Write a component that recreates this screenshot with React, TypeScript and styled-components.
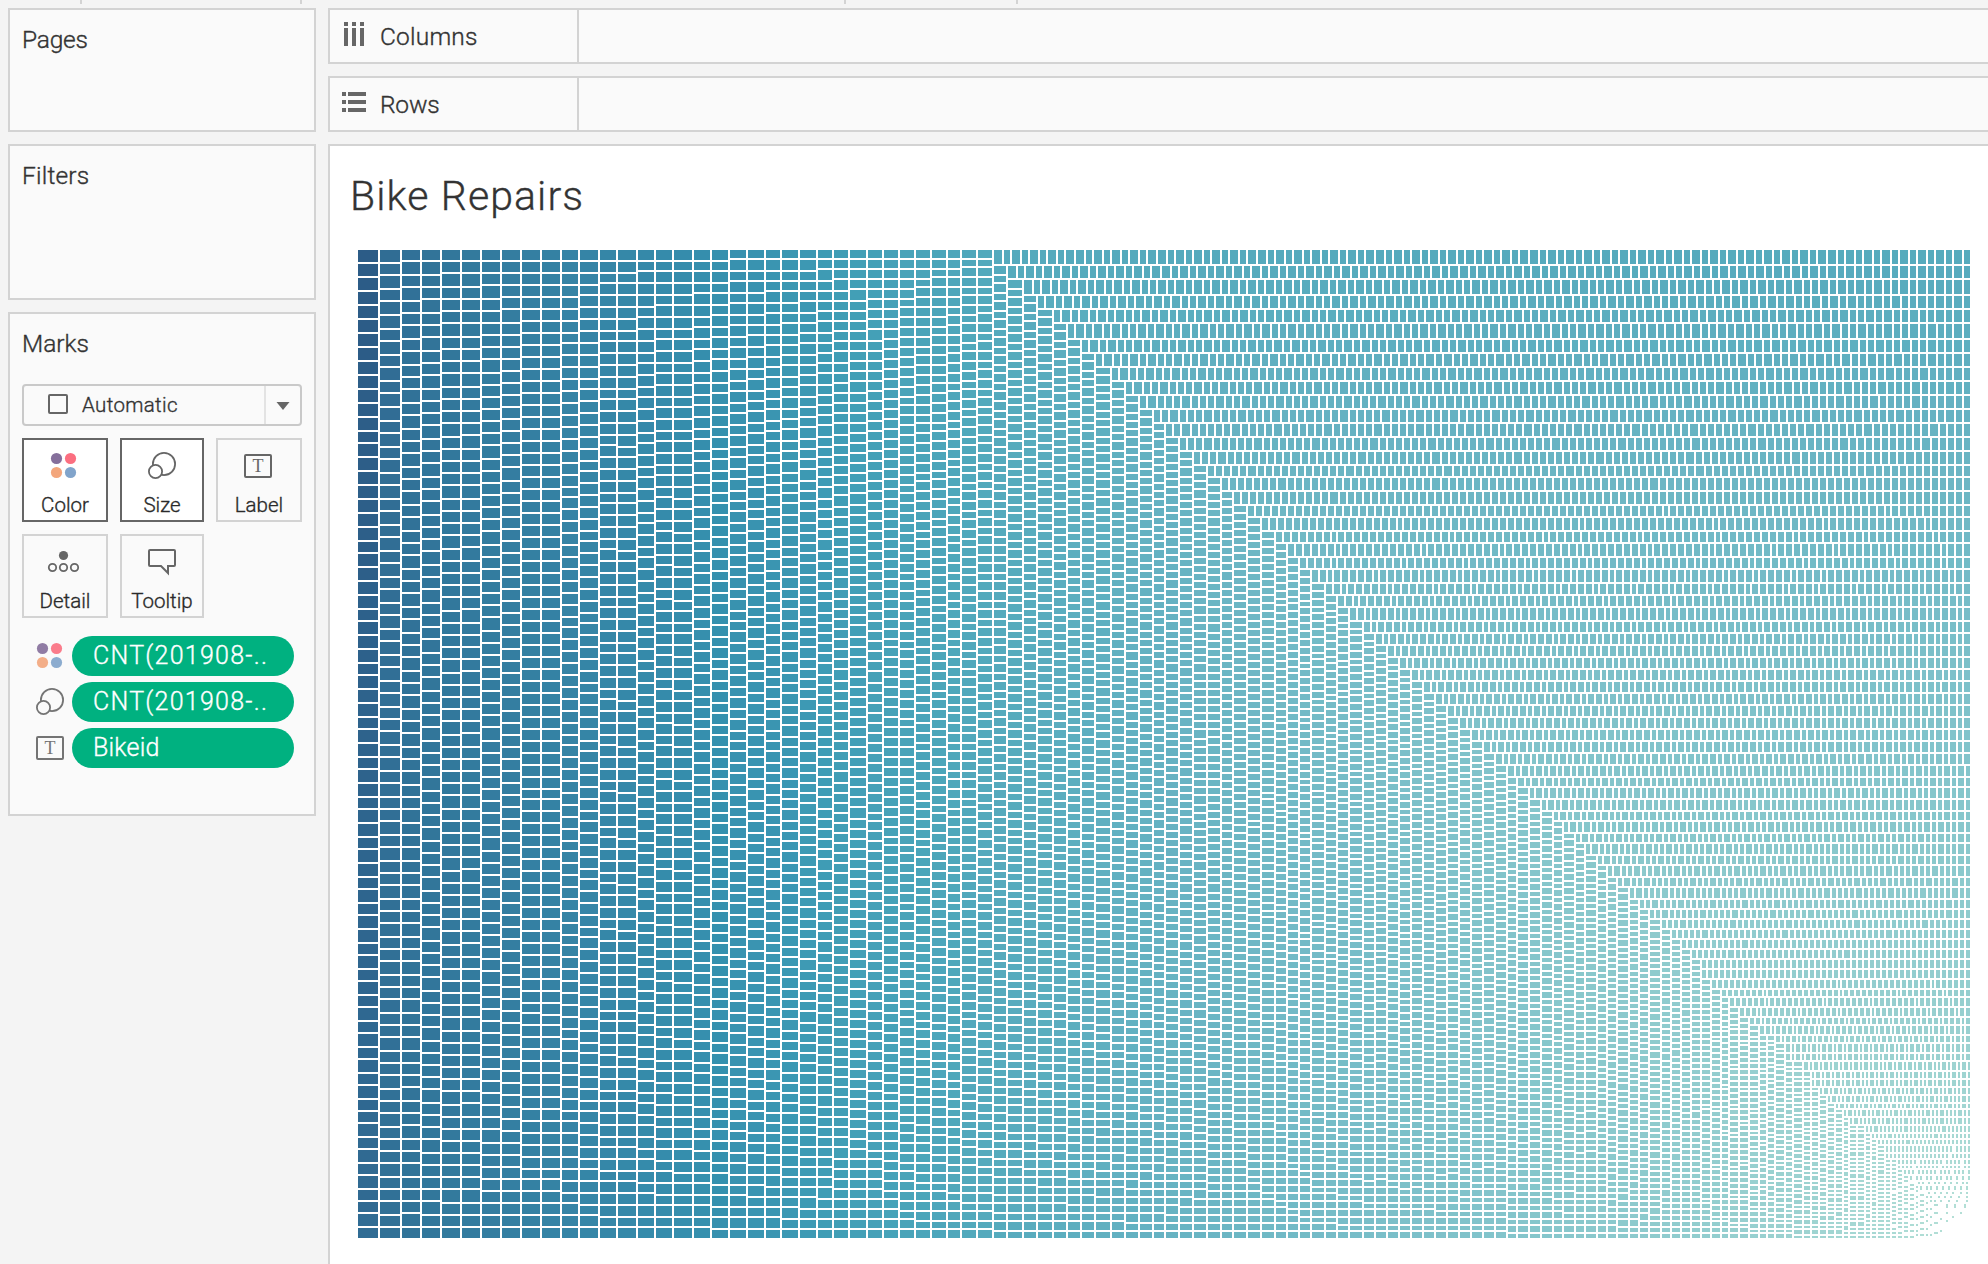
import React from "react";
import styled, { createGlobalStyle } from "styled-components";

const GlobalStyle = createGlobalStyle`
  *, *::before, *::after { box-sizing: border-box; }
  body { margin: 0; background: #f4f4f4; overflow: hidden; }
`;

const App_ = styled.div`
  width: 1988px;
  height: 1264px;
  overflow: hidden;
  background: #f4f4f4;
  color: #333;
  font-family: Roboto, "Liberation Sans", sans-serif;
  font-weight: 300;
  -webkit-text-stroke: 0.35px currentColor;
  display: flex;
  flex-direction: column;
`;

const TickStrip = styled.div`
  height: 8px;
  display: flex;
`;

const Tick = styled.div<{ $gap: number }>`
  width: 2px;
  height: 4px;
  margin-left: ${(p) => p.$gap}px;
  background: #d3d3d3;
`;

const Workspace = styled.div`
  flex: 1;
  display: flex;
  gap: 12px;
  padding-left: 8px;
`;

const Sidebar = styled.div`
  width: 308px;
  display: flex;
  flex-direction: column;
  gap: 12px;
`;

const Card = styled.section<{ $h: number }>`
  height: ${(p) => p.$h}px;
  background: #fafafa;
  border: 2px solid #d3d3d3;
  padding: 14px 12px 0;
`;

const CardTitle = styled.h2<{ $spacing: number }>`
  margin: 0;
  font-size: 24.5px;
  line-height: 32px;
  font-weight: 300;
  letter-spacing: ${(p) => p.$spacing}px;
`;

const MarkSelect = styled.div`
  margin-top: 24px;
  height: 42px;
  border: 2px solid #c9c9c9;
  border-radius: 4px;
  display: flex;
`;

const MarkValue = styled.div`
  flex: 1;
  display: flex;
  align-items: center;
  gap: 14px;
  padding-left: 24px;
  font-size: 20.5px;
  letter-spacing: 0.35px;
`;

const SquareIcon = styled.span`
  width: 20px;
  height: 20px;
  margin-top: -2px;
  border: 2px solid #666;
  border-radius: 2px;
`;

const SelectArrow = styled.div`
  width: 36px;
  border-left: 2px solid #e3e3e3;
  display: flex;
  align-items: center;
  justify-content: center;
  padding-top: 2px;
`;

const ButtonGrid = styled.div`
  margin-top: 12px;
  display: grid;
  grid-template-columns: 86px 84px 86px;
  grid-auto-rows: 84px;
  gap: 12px;
`;

const MarkButton = styled.div<{ $active?: boolean }>`
  border: 2px solid ${(p) => (p.$active ? "#666" : "#d3d3d3")};
  background: ${(p) => (p.$active ? "#fff" : "transparent")};
  padding: 12px 0 0 26px;
`;

const ButtonLabel = styled.div`
  margin: 11px 0 0 -26px;
  text-align: center;
  white-space: nowrap;
  font-size: 20.5px;
  line-height: 28px;
  color: #2a2a2a;
`;

const PillList = styled.div`
  margin-top: 18px;
  display: flex;
  flex-direction: column;
  gap: 6px;
  padding-left: 14px;
`;

const PillRow = styled.div`
  display: flex;
  align-items: center;
  gap: 8px;
  & > svg { opacity: 0.9; }
`;

const Pill = styled.div<{ $spacing: number }>`
  width: 222px;
  height: 40px;
  border-radius: 20px;
  background: #00b180;
  color: #fff;
  padding-left: 21px;
  font-size: 25px;
  line-height: 40px;
  letter-spacing: ${(p) => p.$spacing}px;
`;

const Main = styled.div`
  flex: 1;
  display: flex;
  flex-direction: column;
  gap: 12px;
`;

const Shelf = styled.div`
  height: 56px;
  background: #fafafa;
  border: 2px solid #d3d3d3;
  border-right: 0;
  display: flex;
`;

const ShelfHead = styled.div`
  width: 249px;
  border-right: 2px solid #d3d3d3;
  display: flex;
  align-items: center;
  gap: 13px;
  padding-left: 11px;
  font-size: 24.5px;
`;

const ShelfName = styled.span<{ $spacing: number }>`
  padding-top: 1px;
  letter-spacing: ${(p) => p.$spacing}px;
`;

const Sheet = styled.section`
  flex: 1;
  background: #fff;
  border: solid #d3d3d3;
  border-width: 2px 0 0 2px;
  padding: 24px 0 0 20px;
`;

const SheetTitle = styled.h1`
  margin: 0 0 28px;
  height: 52px;
  line-height: 52px;
  font-size: 41px;
  font-weight: 300;
  letter-spacing: 1.1px;
`;

const Chart = styled.svg`
  display: block;
  margin-left: 8px;
`;

const IconBox = styled.svg`
  display: block;
  overflow: visible;
  flex: none;
`;

function ColorIcon() {
  return (
    <IconBox width="28" height="28">
      <circle cx="6.5" cy="6.5" r="5.6" fill="#856f9b" />
      <circle cx="20.5" cy="6.5" r="5.6" fill="#fb6f80" />
      <circle cx="6.5" cy="20.5" r="5.6" fill="#f3a67c" />
      <circle cx="20.5" cy="20.5" r="5.6" fill="#81a4cb" />
    </IconBox>
  );
}

function SizeIcon({ fill }: { fill: string }) {
  return (
    <IconBox width="28" height="28" fill={fill} stroke="#666" strokeWidth="1.8">
      <circle cx="16" cy="12" r="11.1" />
      <circle cx="7.5" cy="19.5" r="6.6" />
    </IconBox>
  );
}

function LabelIcon() {
  return (
    <IconBox width="28" height="28">
      <rect x="1" y="3" width="26" height="22" rx="1" fill="none" stroke="#666" strokeWidth="2" />
      <text x="14" y="20" textAnchor="middle" fontFamily="Liberation Serif, serif" fontWeight="400" fontSize="18" fill="#666">
        T
      </text>
    </IconBox>
  );
}

function DetailIcon() {
  return (
    <IconBox width="28" height="28" fill="none" stroke="#666" strokeWidth="1.8">
      <circle cx="13.5" cy="7.5" r="4.6" fill="#666" stroke="none" />
      <circle cx="2.5" cy="19.5" r="3.7" />
      <circle cx="13.5" cy="19.5" r="3.7" />
      <circle cx="24.5" cy="19.5" r="3.7" />
    </IconBox>
  );
}

function TooltipIcon() {
  return (
    <IconBox width="28" height="28" fill="none" stroke="#666" strokeWidth="2">
      <path d="M2 2H26Q27 2 27 3V17Q27 18 26 18H20V25L13 18H2Q1 18 1 17V3Q1 2 2 2Z" />
    </IconBox>
  );
}

function ColumnsIcon() {
  return (
    <IconBox width="26" height="28" fill="#666">
      {[3, 11, 19].map((x) => (
        <g key={x}>
          <rect x={x} y="0" width="4" height="4" />
          <rect x={x} y="6" width="4" height="18" />
        </g>
      ))}
    </IconBox>
  );
}

function RowsIcon() {
  return (
    <IconBox width="26" height="26" fill="#666">
      {[1, 9, 17].map((y) => (
        <g key={y}>
          <rect x="1" y={y} width="4" height="4" />
          <rect x="7" y={y} width="18" height="4" />
        </g>
      ))}
    </IconBox>
  );
}

/* Treemap: strips are laid as columns from the left and rows from the top. */

const RIGHT = 1972;
const BOTTOM = 1240;

const COLS = [
  358, 380, 402, 422, 442, 462, 482, 502, 522, 542, 562, 580, 600, 618, 638, 656, 674, 694, 712, 730, 748, 766, 782,
  800, 818, 834, 850, 868, 884, 900, 916, 932, 948, 962, 978, 994, 1008, 1024, 1038, 1054, 1068, 1082, 1096, 1112,
  1126, 1140, 1154, 1166, 1180, 1194, 1208, 1222, 1234, 1248, 1262, 1276, 1288, 1300, 1312, 1326, 1338, 1350, 1364,
  1376, 1388, 1400, 1412, 1424, 1436, 1448, 1460, 1472, 1484, 1496, 1508, 1518, 1530, 1542, 1554, 1564, 1576, 1586,
  1598, 1608, 1618, 1630, 1640, 1650, 1662, 1672, 1682, 1692, 1702, 1712, 1722, 1730, 1740, 1750, 1760, 1768, 1776,
  1786, 1794, 1804, 1812, 1820, 1828, 1836, 1844, 1850, 1858, 1866, 1872, 1878, 1886, 1892, 1898,
];

const ROWS = [
  250, 266, 280, 296, 310, 324, 340, 354, 368, 382, 396, 410, 424, 438, 452, 466, 478, 492, 506, 518, 532, 544, 558,
  570, 584, 596, 608, 622, 634, 646, 658, 670, 682, 694, 706, 718, 730, 742, 754, 766, 778, 788, 800, 812, 822, 834,
  844, 856, 866, 878, 888, 900, 910, 920, 930, 940, 950, 960, 970, 980, 990, 998, 1008, 1018, 1026, 1036, 1044, 1054,
  1062, 1072, 1080, 1088, 1096, 1104, 1110, 1118, 1126, 1134, 1140, 1146, 1154, 1160, 1166, 1170,
];

const TAIL_START = 1702;
const TAIL_ORDER = "RR" + "CRCRCRCRCRCR" + "CCR" + "CRR" + "CCR" + "CRR" + "CRCRCRCRCR" + "CCR" + "CRCR" + "CRR" + "CCRR";

const RAMP = [
  "bce4d8", "aedcd5", "a1d5d2", "95cecf", "89c8cc", "7ec1ca", "72bac6", "66b2c2", "59acbe", "4ba5ba", "419eb6",
  "3b96b2", "358ead", "3586a7", "347ea1", "32779b", "316f96", "2f6790", "2d608a", "2c5985",
].map((h) => [0, 2, 4].map((i) => parseInt(h.slice(i, i + 2), 16)));

const SHADE: [number, number][] = [
  [358, 18.6], [380, 16.3], [402, 15.7], [462, 14.6], [562, 13.4], [674, 12.2], [782, 11], [850, 9.9], [994, 8.3],
  [1100, 7.5], [1350, 5.6], [1500, 4.6], [1692, 3.3], [1800, 2.4], [1880, 1.5], [1940, 0.7], [1972, 0.3],
];

function lerpTable(table: [number, number][], x: number) {
  for (let i = 1; i < table.length; i++) {
    if (x <= table[i][0]) {
      const [x0, y0] = table[i - 1];
      const [x1, y1] = table[i];
      return y0 + ((y1 - y0) * Math.max(0, x - x0)) / (x1 - x0);
    }
  }
  return table[table.length - 1][1];
}

function shade(x: number) {
  const t = lerpTable(SHADE, x);
  const i = Math.min(RAMP.length - 2, Math.floor(t));
  const c = RAMP[i].map((v, k) => Math.round(v + (RAMP[i + 1][k] - v) * (t - i)));
  return `rgb(${c.join(",")})`;
}

const STRIP: [number, number][] = [
  [358, 22.3], [380, 21.2], [402, 20.6], [462, 20], [562, 19.1], [674, 18.2], [782, 17.2], [850, 16.5], [994, 14.7],
  [1160, 13.6], [1350, 12.1], [1500, 11.5], [1620, 10.6], [1702, 9.7], [1768, 8.8], [1822, 7.8], [1858, 7.1],
  [1886, 6.5], [1898, 6.1], [1972, 2.4],
];

const even = (v: number) => 2 * Math.round(v / 2);

type Block = { d: string; fill: string };

function buildTreemap(): Block[] {
  const blocks: Block[] = [];
  let ci = 0;
  let ri = 0;
  let tail = 0;
  let x = COLS[0];
  let y = ROWS[0];

  const emit = (vertical: boolean, size: number) => {
    const from = vertical ? y : x;
    const to = vertical ? BOTTOM : RIGHT;
    const len = to - from;
    const ideal = lerpTable(STRIP, x);
    const end = lerpTable(STRIP, x + size);
    // Pitch follows from the cell area and the nominal strip width, so rounding of one strip does not show.
    const nominal = (ideal + end) / 2;
    const p0 = (ideal * ideal) / 1.618 / nominal;
    const p1 = (end * end) / 1.618 / nominal;
    const n = Math.max(1, Math.round(len / ((p0 + p1) / 2)));
    const skew = (p0 - p1) / (p0 + p1);
    const pos = (k: number) => {
      const u = k / n;
      return from + len * (u + skew * u * (1 - u));
    };
    const c0 = even(vertical ? x : y);
    const c1 = even((vertical ? x : y) + size) - 2;
    for (let k = 0; k < n; k += 8) {
      let d = "";
      for (let j = k; j < Math.min(n, k + 8); j++) {
        const a = even(pos(j));
        const b = even(pos(j + 1)) - 2;
        if (b <= a || c1 <= c0) continue;
        d += vertical ? `M${c0} ${a}H${c1}V${b}H${c0}Z` : `M${a} ${c0}H${b}V${c1}H${a}Z`;
      }
      if (d) blocks.push({ d, fill: shade(x + (size * k) / n) });
    }
  };

  while (RIGHT - x > 3 && BOTTOM - y > 3) {
    const w = RIGHT - x;
    const h = BOTTOM - y;
    let column = w >= h;
    if (x >= TAIL_START && tail < TAIL_ORDER.length) column = TAIL_ORDER[tail++] === "C";
    if (column) {
      const size = ci + 1 < COLS.length ? COLS[ci + 1] - COLS[ci] : lerpTable(STRIP, x);
      emit(true, size);
      x += size;
      ci++;
    } else {
      const size = ri + 1 < ROWS.length ? ROWS[ri + 1] - ROWS[ri] : lerpTable(STRIP, x);
      emit(false, size);
      y += size;
      ri++;
    }
  }
  return blocks;
}

const BLOCKS = buildTreemap();

function Treemap() {
  return (
    <Chart width="1614" height="990" viewBox="358 250 1614 990" shapeRendering="crispEdges">
      {BLOCKS.map((b, i) => (
        <path key={i} d={b.d} fill={b.fill} />
      ))}
    </Chart>
  );
}

export default function App() {
  return (
    <App_>
      <GlobalStyle />
      <TickStrip>
        <Tick $gap={80} />
        <Tick $gap={218} />
        <Tick $gap={542} />
        <Tick $gap={170} />
      </TickStrip>
      <Workspace>
        <Sidebar>
          <Card $h={124}>
            <CardTitle $spacing={-0.2}>Pages</CardTitle>
          </Card>
          <Card $h={156}>
            <CardTitle $spacing={0.2}>Filters</CardTitle>
          </Card>
          <Card $h={504}>
            <CardTitle $spacing={0}>Marks</CardTitle>
            <MarkSelect>
              <MarkValue>
                <SquareIcon />
                Automatic
              </MarkValue>
              <SelectArrow>
                <svg width="14" height="8">
                  <path d="M0.5 0H13.5L7 8Z" fill="#666" />
                </svg>
              </SelectArrow>
            </MarkSelect>
            <ButtonGrid>
              <MarkButton $active>
                <ColorIcon />
                <ButtonLabel>Color</ButtonLabel>
              </MarkButton>
              <MarkButton $active>
                <SizeIcon fill="#fff" />
                <ButtonLabel>Size</ButtonLabel>
              </MarkButton>
              <MarkButton>
                <LabelIcon />
                <ButtonLabel>Label</ButtonLabel>
              </MarkButton>
              <MarkButton>
                <DetailIcon />
                <ButtonLabel>Detail</ButtonLabel>
              </MarkButton>
              <MarkButton>
                <TooltipIcon />
                <ButtonLabel>Tooltip</ButtonLabel>
              </MarkButton>
            </ButtonGrid>
            <PillList>
              <PillRow>
                <ColorIcon />
                <Pill $spacing={1.25}>CNT(201908-..</Pill>
              </PillRow>
              <PillRow>
                <SizeIcon fill="#fafafa" />
                <Pill $spacing={1.25}>CNT(201908-..</Pill>
              </PillRow>
              <PillRow>
                <LabelIcon />
                <Pill $spacing={0.2}>Bikeid</Pill>
              </PillRow>
            </PillList>
          </Card>
        </Sidebar>
        <Main>
          <Shelf>
            <ShelfHead>
              <ColumnsIcon />
              <ShelfName $spacing={0.2}>Columns</ShelfName>
            </ShelfHead>
          </Shelf>
          <Shelf>
            <ShelfHead>
              <RowsIcon />
              <ShelfName $spacing={-0.2}>Rows</ShelfName>
            </ShelfHead>
          </Shelf>
          <Sheet>
            <SheetTitle>Bike Repairs</SheetTitle>
            <Treemap />
          </Sheet>
        </Main>
      </Workspace>
    </App_>
  );
}
